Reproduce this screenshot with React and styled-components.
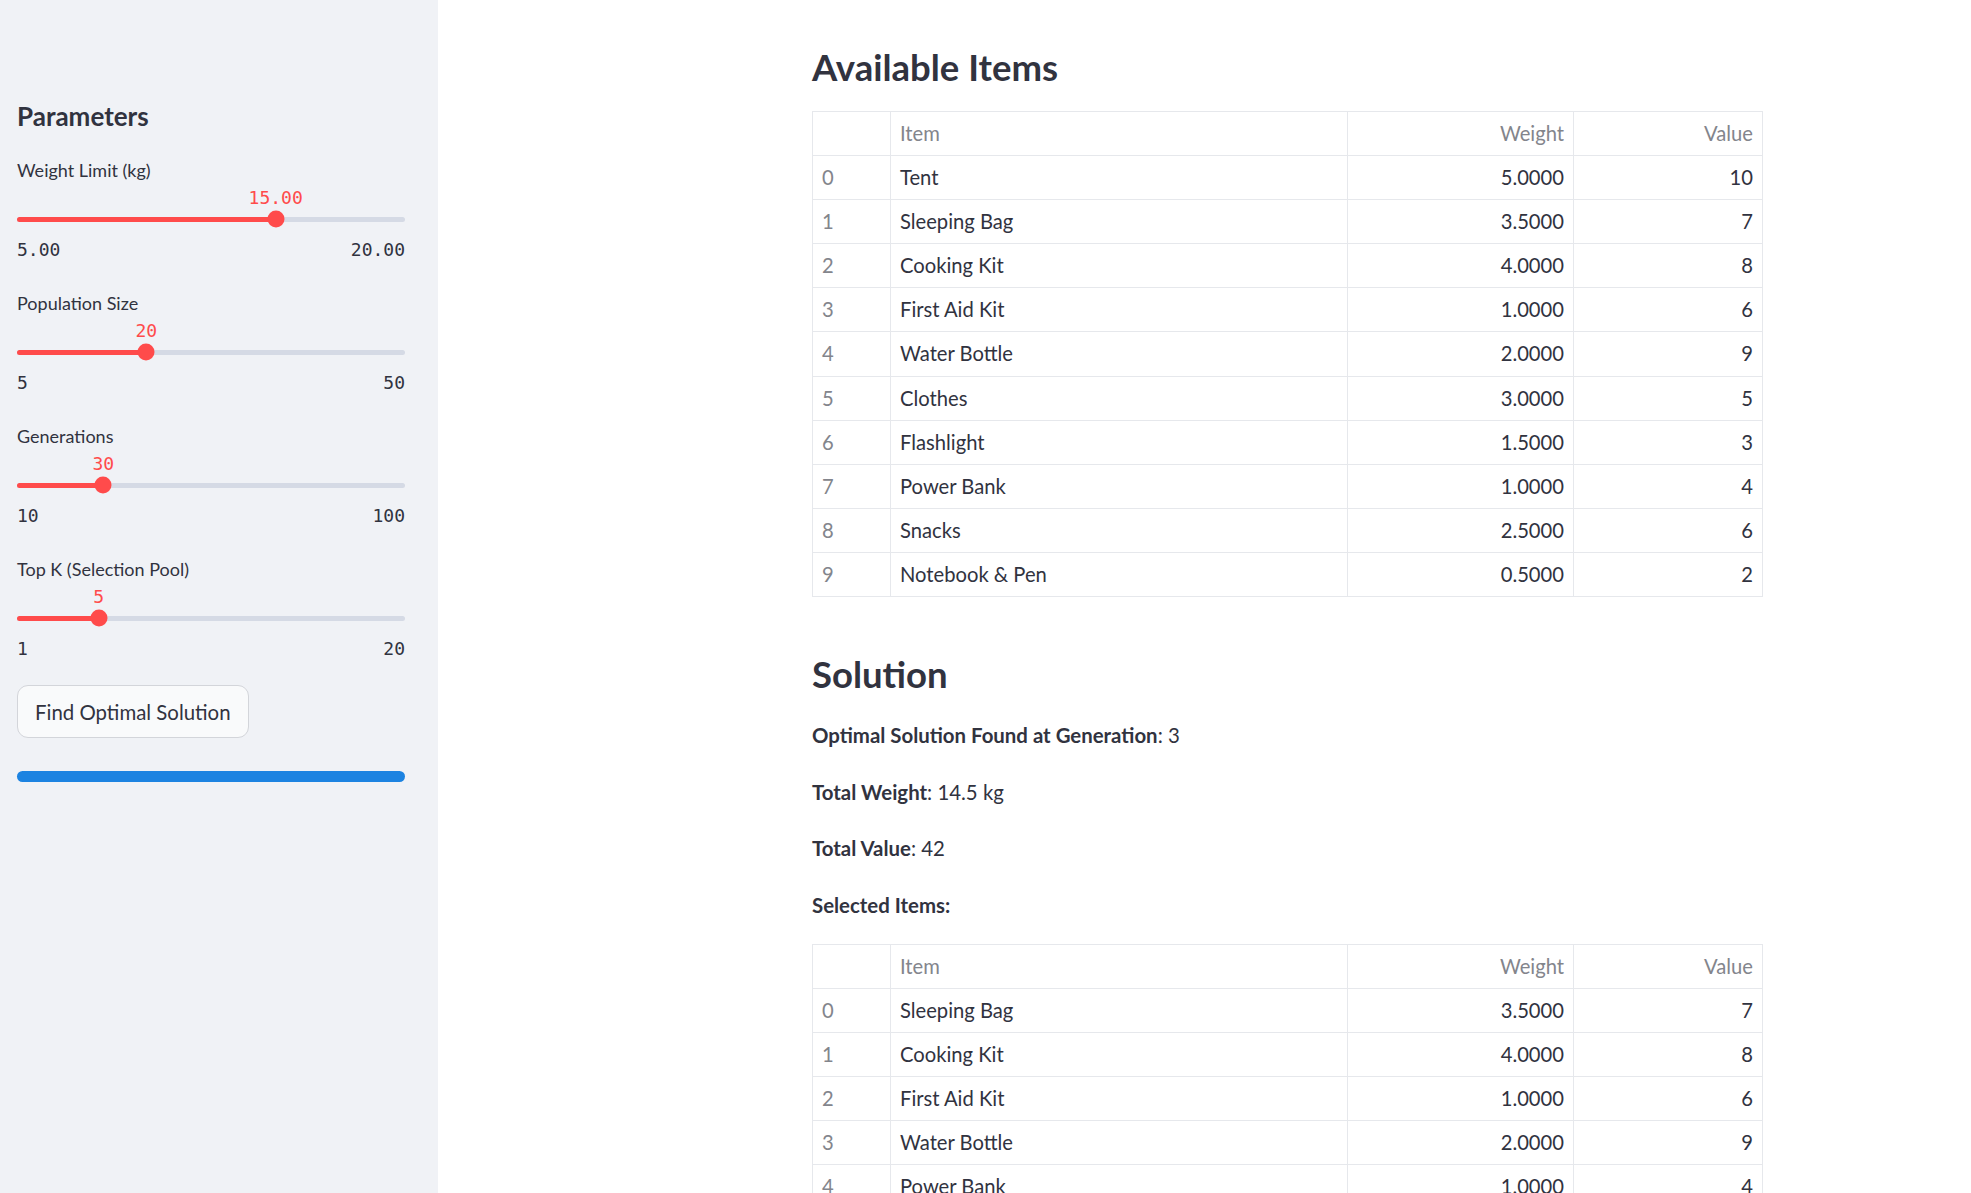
import React from 'react'
import styled, { createGlobalStyle } from 'styled-components'

const GlobalStyle = createGlobalStyle`
    html, body {
        margin: 0;
        padding: 0;
        height: 100%;
        overflow: hidden;
        background: #ffffff;
    }
    body {
        font-family: Lato, "Noto Sans", sans-serif;
        color: #31333f;
    }
    #root {
        height: 100%;
    }
`

const Shell = styled.div`
    display: flex;
    height: 100vh;
`
const Sidebar = styled.aside`
    width: 438px;
    flex-shrink: 0;
    box-sizing: border-box;
    background: #f0f2f6;
    padding: 100px 33px 0 17px;
    display: flex;
    flex-direction: column;
`
const SideTitle = styled.h2`
    margin: 0 0 27px 0;
    font-size: 26px;
    line-height: 32px;
    font-weight: 700;
`
const SliderBlock = styled.div`
    display: flex;
    flex-direction: column;
    & + & {
        margin-top: 31px;
    }
`
const Label = styled.label`
    font-size: 18px;
    line-height: 22px;
`
const ValueRow = styled.div`
    position: relative;
    height: 22px;
    margin-top: 6px;
`
const ValueLabel = styled.span`
    position: absolute;
    top: 0;
    transform: translateX(-50%);
    font-family: "DejaVu Sans Mono", monospace;
    font-size: 18px;
    line-height: 22px;
    color: #ff4b4b;
    white-space: nowrap;
`
const TrackArea = styled.div`
    position: relative;
    height: 20px;
    display: flex;
    align-items: center;
`
const Track = styled.div`
    width: 100%;
    height: 5px;
    border-radius: 3px;
    background: #d5dae5;
    overflow: hidden;
`
const Fill = styled.div`
    height: 100%;
    background: #ff4b4b;
`
const Thumb = styled.div`
    position: absolute;
    top: 50%;
    width: 17px;
    height: 17px;
    border-radius: 50%;
    background: #ff4b4b;
    transform: translate(-50%, -50%);
`
const TickRow = styled.div`
    display: flex;
    justify-content: space-between;
    margin-top: 10px;
    font-family: "DejaVu Sans Mono", monospace;
    font-size: 18px;
    line-height: 22px;
    color: #31333f;
`
const Button = styled.button`
    align-self: flex-start;
    margin-top: 25px;
    height: 53px;
    padding: 0 17px;
    box-sizing: border-box;
    border: 1px solid #d3d5da;
    border-radius: 11px;
    background: #f9fafb;
    color: #31333f;
    font-family: Lato, "Noto Sans", sans-serif;
    font-size: 20.4px;
    cursor: pointer;
`
const Progress = styled.div`
    margin-top: 33px;
    height: 11px;
    border-radius: 6px;
    background: #1c83e1;
`

const Main = styled.main`
    flex: 1;
    overflow: hidden;
    padding: 45px 0 0 374px;
`
const Content = styled.div`
    width: 950px;
`
const SectionTitle = styled.h3`
    margin: ${p => p.$top || 0}px 0 0 0;
    font-size: 36.5px;
    line-height: 44px;
    font-weight: 700;
`
const Table = styled.table`
    margin-top: ${p => p.$top}px;
    width: 950px;
    table-layout: fixed;
    border-collapse: collapse;
    font-size: 20.2px;
`
const Cell = styled.td`
    border: 1px solid #e6e8ec;
    padding: 0 9px;
    line-height: 43.1px;
    white-space: nowrap;
    text-align: ${p => (p.$right ? 'right' : 'left')};
    color: ${p => (p.$muted ? '#83858c' : '#31333f')};
    font-weight: 400;
`
const Paragraphs = styled.div`
    margin-top: 23px;
    display: flex;
    flex-direction: column;
    gap: 24px;
`
const Para = styled.p`
    margin: 0;
    font-size: 20.4px;
    line-height: 1.6;
    strong {
        font-weight: 700;
    }
`

const sliders = [
    { label: 'Weight Limit (kg)', min: 5, max: 20, value: 15, fmt: v => v.toFixed(2) },
    { label: 'Population Size', min: 5, max: 50, value: 20, fmt: v => String(v) },
    { label: 'Generations', min: 10, max: 100, value: 30, fmt: v => String(v) },
    { label: 'Top K (Selection Pool)', min: 1, max: 20, value: 5, fmt: v => String(v) },
]

const items = [
    ['Tent', 5, 10],
    ['Sleeping Bag', 3.5, 7],
    ['Cooking Kit', 4, 8],
    ['First Aid Kit', 1, 6],
    ['Water Bottle', 2, 9],
    ['Clothes', 3, 5],
    ['Flashlight', 1.5, 3],
    ['Power Bank', 1, 4],
    ['Snacks', 2.5, 6],
    ['Notebook & Pen', 0.5, 2],
]

const selected = [1, 2, 3, 4, 7, 8, 9].map(i => items[i])

const columnWidths = [78, 457, 226, 189]

function Slider({ label, min, max, value, fmt }) {
    const pct = ((value - min) / (max - min)) * 100
    return (
        <SliderBlock>
            <Label>{label}</Label>
            <ValueRow>
                <ValueLabel style={{ left: `${pct}%` }}>{fmt(value)}</ValueLabel>
            </ValueRow>
            <TrackArea>
                <Track>
                    <Fill style={{ width: `${pct}%` }} />
                </Track>
                <Thumb style={{ left: `${pct}%` }} />
            </TrackArea>
            <TickRow>
                <span>{fmt(min)}</span>
                <span>{fmt(max)}</span>
            </TickRow>
        </SliderBlock>
    )
}

function ItemTable({ rows, top }) {
    return (
        <Table $top={top}>
            <colgroup>
                {columnWidths.map((w, i) => <col key={i} style={{ width: w }} />)}
            </colgroup>
            <thead>
                <tr>
                    <Cell as="th" $muted></Cell>
                    <Cell as="th" $muted>Item</Cell>
                    <Cell as="th" $muted $right>Weight</Cell>
                    <Cell as="th" $muted $right>Value</Cell>
                </tr>
            </thead>
            <tbody>
                {rows.map(([name, weight, value], i) => (
                    <tr key={name}>
                        <Cell $muted>{i}</Cell>
                        <Cell>{name}</Cell>
                        <Cell $right>{weight.toFixed(4)}</Cell>
                        <Cell $right>{value}</Cell>
                    </tr>
                ))}
            </tbody>
        </Table>
    )
}

export default function App() {
    return (
        <>
            <GlobalStyle />
            <Shell>
                <Sidebar>
                    <SideTitle>Parameters</SideTitle>
                    {sliders.map(s => <Slider key={s.label} {...s} />)}
                    <Button>Find Optimal Solution</Button>
                    <Progress />
                </Sidebar>
                <Main>
                    <Content>
                        <SectionTitle>Available Items</SectionTitle>
                        <ItemTable rows={items} top={22} />
                        <SectionTitle $top={55}>Solution</SectionTitle>
                        <Paragraphs>
                            <Para><strong>Optimal Solution Found at Generation</strong>: 3</Para>
                            <Para><strong>Total Weight</strong>: 14.5 kg</Para>
                            <Para><strong>Total Value</strong>: 42</Para>
                            <Para><strong>Selected Items:</strong></Para>
                        </Paragraphs>
                        <ItemTable rows={selected} top={22} />
                    </Content>
                </Main>
            </Shell>
        </>
    )
}
